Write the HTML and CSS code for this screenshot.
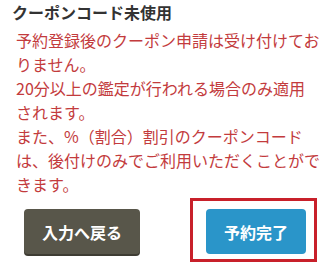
FILE: index.html
```html
<!DOCTYPE html>
<html lang="ja">
<head>
    <meta charset="UTF-8">
    <meta name="viewport" content="width=device-width, initial-scale=1.0">
    <title>クーポンコード</title>
    <link rel="stylesheet" href="styles.css">
</head>
<body>
    <div class="coupon">
        <h3 class="coupon-title">クーポンコード未使用</h3>
        <p class="coupon-note">
            予約登録後のクーポン申請は受け付けてお<br>りません。<br>
            20分以上の鑑定が行われる場合のみ適用<br>されます。<br>
            また、%（割合）割引のクーポンコード<br>は、後付けのみでご利用いただくことがで<br>きます。
        </p>
        <div class="actions">
            <button class="btn btn-back">入力へ戻る</button>
            <div class="highlight">
                <button class="btn btn-submit">予約完了</button>
            </div>
        </div>
    </div>
</body>
</html>
```

FILE: styles.css
```css
body {
    margin: 0;
    background-color: #fff;
    font-family: "Noto Sans CJK JP", "Noto Sans", sans-serif;
}
.coupon {
    padding-left: 12px;
}
.coupon-title {
    margin: 0;
    font-size: 16px;
    line-height: 24px;
    font-weight: bold;
    color: #333;
}
.coupon-note {
    margin: 4px 0 0 4px;
    font-size: 16px;
    line-height: 24px;
    color: #c33b3d;
    white-space: nowrap;
}
.actions {
    display: flex;
    align-items: flex-start;
    margin-top: 2px;
    padding-left: 12px;
}
.btn {
    height: 45px;
    border: none;
    border-radius: 4px;
    color: #fff;
    font-family: inherit;
    font-size: 16px;
    font-weight: bold;
    padding: 0;
    cursor: pointer;
}
.btn-back {
    width: 116px;
    margin-top: 11px;
    background-color: #58564a;
    box-shadow: 0 2px 0 #3e3c33;
}
.highlight {
    margin-left: 50px;
    padding: 8px 8px 5px 13px;
    border: 3px solid #c8202a;
}
.btn-submit {
    display: block;
    width: 100px;
    background-color: #2a95c9;
}
```
